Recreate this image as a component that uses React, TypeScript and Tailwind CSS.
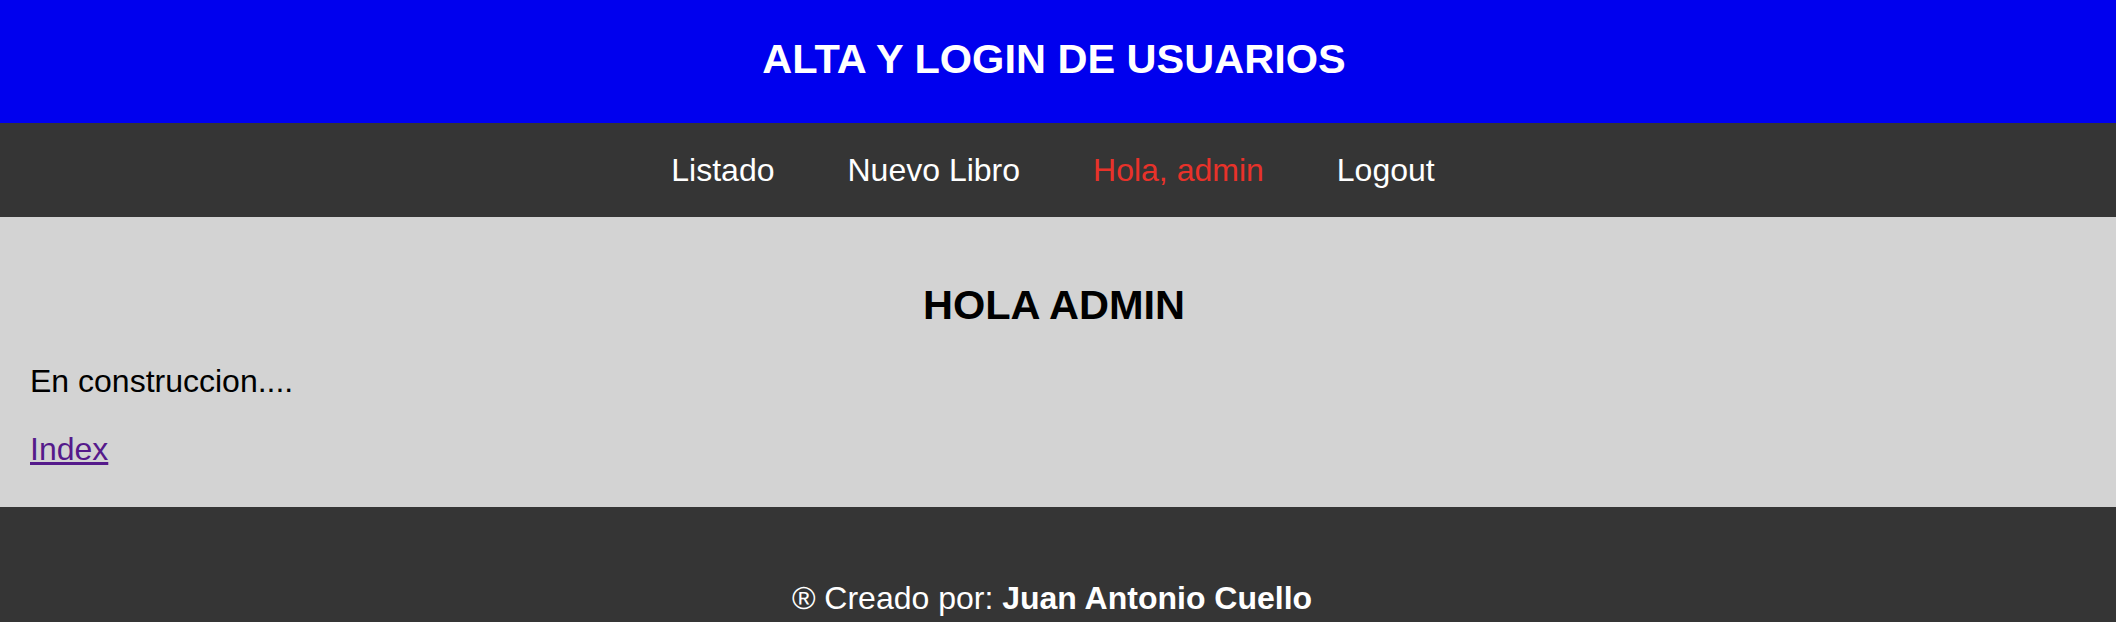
export default function App() {
  const links = [
    { name: 'Listado', color: 'text-white' },
    { name: 'Nuevo Libro', color: 'text-white' },
    { name: 'Hola, admin', color: 'text-[#e8322a]' },
    { name: 'Logout', color: 'text-white' },
  ];

  return (
    <div className="w-full min-h-screen font-['Liberation_Sans',Arial,sans-serif]">
      {/* Header */}
      <header className="h-[123px] bg-[#0000ee] flex items-center justify-center pb-[6px] pr-[8px]">
        <h1 className="text-[41.5px] leading-[48px] font-bold text-white">ALTA Y LOGIN DE USUARIOS</h1>
      </header>

      {/* Nav */}
      <nav className="h-[94px] bg-[#353535] flex items-center justify-center gap-[73px] pr-[10px]">
        {links.map((link) => (
          <a key={link.name} href="#" className={`text-[32px] leading-[36px] ${link.color}`}>
            {link.name}
          </a>
        ))}
      </nav>

      {/* Main */}
      <main className="h-[290px] bg-[#d3d3d3] pt-[64px] px-[30px]">
        <h2 className="text-[41.5px] leading-[48px] font-bold text-black text-center pr-[8px]">HOLA ADMIN</h2>
        <p className="mt-[34px] text-[32px] leading-[36px] text-black">En construccion....</p>
        <p className="mt-[32px] text-[32px] leading-[36px]">
          <a href="#" className="text-[#551a8b] underline">Index</a>
        </p>
      </main>

      {/* Footer */}
      <footer className="bg-[#353535] pt-[73px] pb-[40px] text-center">
        <p className="text-[32px] leading-[36px] text-white pr-[12px]">
          ® Creado por: <span className="font-bold">Juan Antonio Cuello</span>
        </p>
      </footer>
    </div>
  );
}
